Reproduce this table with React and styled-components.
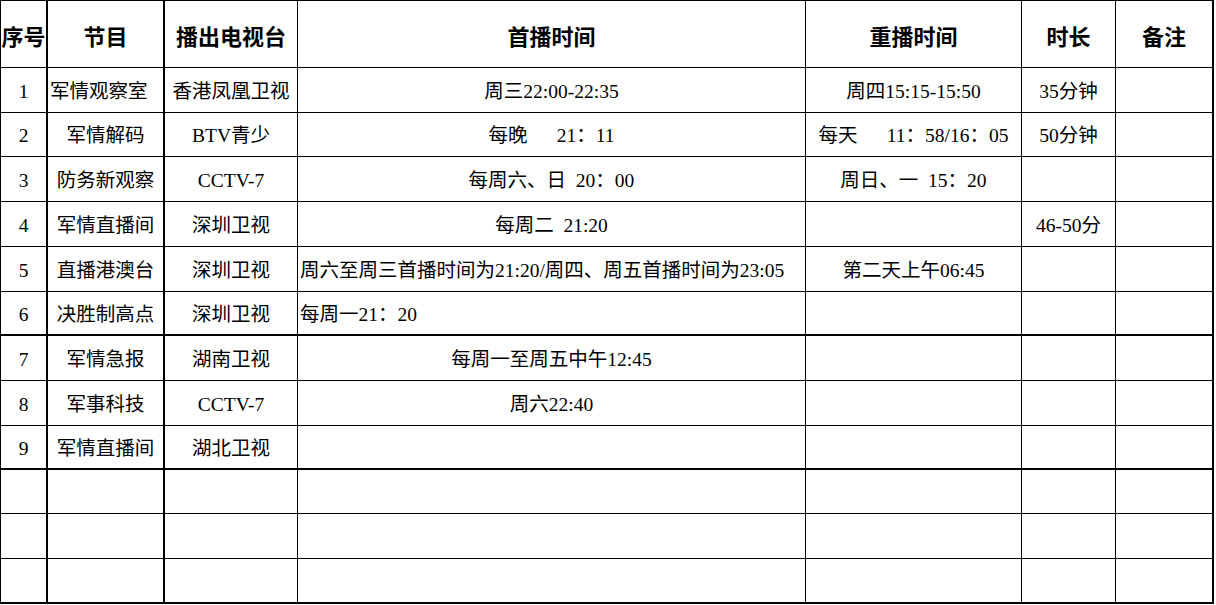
import React from 'react';
import styled, { createGlobalStyle } from 'styled-components';

const GlobalStyle = createGlobalStyle`
    html, body {
        margin:0;
        padding:0;
        background:#fff;
    }
`;

const COLS = [47, 117, 133, 508, 216, 94, 98];
const THICK_COLS = [0, 1, 6];
const ROW_HEIGHTS = [67, 45, 44, 45, 45, 45, 44, 45, 45, 44, 44, 45, 45];
const THICK_ROWS = [6, 9, 12];

const HEADER = ['序号', '节目', '播出电视台', '首播时间', '重播时间', '时长', '备注'];

// each body row: [no, show, station, first, replay, length, note]
// a cell can be an object when it is left aligned
const ROWS = [
    ['1', { text: '军情观察室', left: true }, '香港凤凰卫视', '周三22:00-22:35', '周四15:15-15:50', '35分钟', ''],
    ['2', '军情解码', 'BTV青少', '每晚　  21：11', '每天　  11：58/16：05', '50分钟', ''],
    ['3', '防务新观察', 'CCTV-7', '每周六、日  20：00', '周日、一  15：20', '', ''],
    ['4', '军情直播间', '深圳卫视', '每周二  21:20', '', '46-50分', ''],
    ['5', '直播港澳台', '深圳卫视', { text: '周六至周三首播时间为21:20/周四、周五首播时间为23:05', left: true }, '第二天上午06:45', '', ''],
    ['6', '决胜制高点', '深圳卫视', { text: '每周一21：20', left: true }, '', '', ''],
    ['7', '军情急报', '湖南卫视', '每周一至周五中午12:45', '', '', ''],
    ['8', '军事科技', 'CCTV-7', '周六22:40', '', '', ''],
    ['9', '军情直播间', '湖北卫视', '', '', '', ''],
    ['', '', '', '', '', '', ''],
    ['', '', '', '', '', '', ''],
    ['', '', '', '', '', '', ''],
];

const Sheet = styled.div`
    display:grid;
    grid-template-columns:${COLS.map(w => w + 'px').join(' ')};
    grid-template-rows:${ROW_HEIGHTS.map(h => h + 'px').join(' ')};
    width:max-content;
    border-left:1px solid #000;
    border-top:1px solid #000;
    color:#000;
`;

const Cell = styled.div`
    box-sizing:border-box;
    display:flex;
    align-items:center;
    justify-content:${p => (p.$left ? 'flex-start' : 'center')};
    padding:3px ${p => (p.$left ? '2px' : '0')} 0;
    border-right:${p => (p.$thickRight ? 2 : 1)}px solid #000;
    border-bottom:${p => (p.$thickBottom ? 2 : 1)}px solid #000;
    white-space:pre;
    overflow:visible;
    font-family:"Liberation Serif", "Noto Sans CJK SC", serif;
    font-size:19.5px;
    line-height:1;
`;

const HeadCell = styled(Cell)`
    font-family:"Noto Sans CJK SC", "Noto Sans", sans-serif;
    font-weight:700;
    font-size:22px;
    padding-top:2px;
`;

const App = () => {
    return (
        <>
            <GlobalStyle />
            <Sheet>
                {HEADER.map((h, c) => (
                    <HeadCell key={'h' + c} $thickRight={THICK_COLS.includes(c)}>
                        {h}
                    </HeadCell>
                ))}
                {ROWS.map((row, r) =>
                    row.map((cell, c) => {
                        const text = typeof cell === 'string' ? cell : cell.text;
                        const left = typeof cell === 'object' && cell.left;
                        return (
                            <Cell
                                key={r + '-' + c}
                                $left={left}
                                $thickRight={THICK_COLS.includes(c)}
                                $thickBottom={THICK_ROWS.includes(r + 1)}
                            >
                                {text}
                            </Cell>
                        );
                    })
                )}
            </Sheet>
        </>
    );
};

export default App;
